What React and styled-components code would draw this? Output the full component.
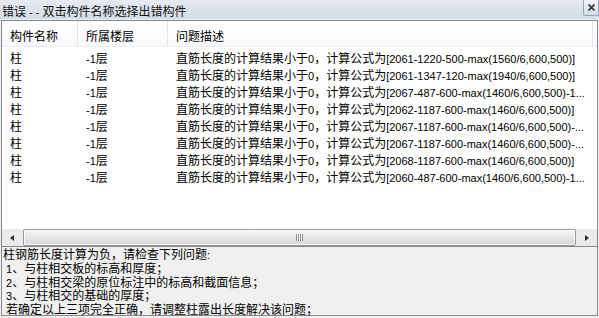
import React from 'react';
import styled, { createGlobalStyle } from 'styled-components';

const GlobalStyle = createGlobalStyle`
  html, body {
    margin: 0;
    padding: 0;
    background: #f0f0f0;
  }
  body {
    font-family: "Noto Sans CJK SC", "Liberation Sans", sans-serif;
    font-size: 12px;
    color: #000;
  }
`

const Dialog = styled.div`
  width: 599px;
  height: 318px;
  display: flex;
  flex-direction: column;
  background: #f0f0f0;
  overflow: hidden;
`

const TitleBar = styled.div`
  height: 19px;
  display: flex;
  align-items: flex-start;
  justify-content: space-between;
  background: linear-gradient(#e6ebf1, #d3dbe5);
`

const Title = styled.div`
  padding: 3px 0 0 2px;
  height: 15px;
  line-height: 15px;
  color: #111;
  white-space: pre;
`

const CloseButton = styled.div`
  width: 14px;
  height: 15px;
  border: 1px solid #97a4b5;
  border-top: none;
  border-radius: 0 0 2px 2px;
  background: linear-gradient(#f1f4f8, #d6dde6);
  display: flex;
  align-items: center;
  justify-content: center;
`

const ListBox = styled.div`
  margin: 1px 1px 0;
  height: 225px;
  border: 1px solid #828790;
  background: #fff;
  display: flex;
  flex-direction: column;
`

const HeaderRow = styled.div`
  height: 26px;
  display: grid;
  grid-template-columns: 76px 90px 425px 1fr;
  background: linear-gradient(#ffffff, #f7f8fa);
  border-bottom: 1px solid #eceef1;
  box-sizing: border-box;
`

const HeaderCell = styled.div`
  display: flex;
  align-items: center;
  padding: 3px 8px 0;
  border-right: ${p => (p.$last ? 'none' : '1px solid #e2e4e8')};
  white-space: nowrap;
`

const Body = styled.div`
  flex: 1;
  padding-top: 2px;
  overflow: hidden;
`

const Row = styled.div`
  height: 17px;
  display: grid;
  grid-template-columns: 76px 90px 425px;
  line-height: 17px;
`

const Cell = styled.div`
  padding: 0 8px;
  height: 17px;
  white-space: nowrap;
  overflow: hidden;
`

const Latin = styled.span`
  font-family: "Liberation Sans", "DejaVu Sans", sans-serif;
  font-size: 11px;
  line-height: 1;
`

const ScrollBar = styled.div`
  height: 17px;
  display: flex;
  align-items: stretch;
  background: #ebebeb;
`

const ArrowButton = styled.div`
  width: 20px;
  display: flex;
  align-items: center;
  justify-content: center;
`

const Arrow = styled.div`
  width: 0;
  height: 0;
  border-top: 3.5px solid transparent;
  border-bottom: 3.5px solid transparent;
  ${p => (p.$dir === 'left'
    ? 'border-right: 4px solid #2b2b2b;'
    : 'border-left: 4px solid #2b2b2b;')}
`

const Thumb = styled.div`
  flex: 1;
  margin: 0 1px;
  border: 1px solid #999;
  border-radius: 2px;
  background: linear-gradient(#f7f7f7, #e6e6e6 50%, #d9d9d9);
  box-shadow: inset 0 0 0 1px rgba(255, 255, 255, 0.8);
  display: flex;
  align-items: center;
  justify-content: center;
`

const Grip = styled.div`
  width: 7px;
  height: 7px;
  background: repeating-linear-gradient(90deg, #8a8a8a 0 1px, #fcfcfc 1px 2px);
`

const Notes = styled.div`
  margin: 0 1px;
  height: 68px;
  border: 1px solid #8a8a8a;
  border-top: none;
  background: #f0f0f0;
  padding: 0 0 0 1px;
`

const NoteLine = styled.div`
  height: 13.8px;
  line-height: 13.8px;
  white-space: pre;
`

// ASCII runs get the narrower latin face, as the original UI does
function Mixed({ text }) {
  return text.split(/([\x20-\x7E]+)/).map((part, i) =>
    /[\x20-\x7E]/.test(part) ? <Latin key={i}>{part}</Latin> : part
  );
}

const rows = [
  ['柱', '-1层', '直筋长度的计算结果小于0，计算公式为[2061-1220-500-max(1560/6,600,500)]'],
  ['柱', '-1层', '直筋长度的计算结果小于0，计算公式为[2061-1347-120-max(1940/6,600,500)]'],
  ['柱', '-1层', '直筋长度的计算结果小于0，计算公式为[2067-487-600-max(1460/6,600,500)-1...'],
  ['柱', '-1层', '直筋长度的计算结果小于0，计算公式为[2062-1187-600-max(1460/6,600,500)]'],
  ['柱', '-1层', '直筋长度的计算结果小于0，计算公式为[2067-1187-600-max(1460/6,600,500)-...'],
  ['柱', '-1层', '直筋长度的计算结果小于0，计算公式为[2067-1187-600-max(1460/6,600,500)-...'],
  ['柱', '-1层', '直筋长度的计算结果小于0，计算公式为[2068-1187-600-max(1460/6,600,500)]'],
  ['柱', '-1层', '直筋长度的计算结果小于0，计算公式为[2060-487-600-max(1460/6,600,500)-1...'],
]

const notes = [
  '柱钢筋长度计算为负，请检查下列问题:',
  ' 1、与柱相交板的标高和厚度；',
  ' 2、与柱相交梁的原位标注中的标高和截面信息；',
  ' 3、与柱相交的基础的厚度；',
  ' 若确定以上三项完全正确，请调整柱露出长度解决该问题；',
]

export default function App() {
  return (
    <Dialog>
      <GlobalStyle />
      <TitleBar>
        <Title><Mixed text="错误 - - 双击构件名称选择出错构件" /></Title>
        <CloseButton>
          <svg width="7" height="7" viewBox="0 0 7 7">
            <path d="M0.5 0.5 L6.5 6.5 M6.5 0.5 L0.5 6.5" stroke="#3a3a3a" strokeWidth="1.8" />
          </svg>
        </CloseButton>
      </TitleBar>
      <ListBox>
        <HeaderRow>
          <HeaderCell>构件名称</HeaderCell>
          <HeaderCell>所属楼层</HeaderCell>
          <HeaderCell>问题描述</HeaderCell>
          <HeaderCell $last />
        </HeaderRow>
        <Body>
          {rows.map((r, i) => (
            <Row key={i}>
              <Cell>{r[0]}</Cell>
              <Cell><Mixed text={r[1]} /></Cell>
              <Cell><Mixed text={r[2]} /></Cell>
            </Row>
          ))}
        </Body>
        <ScrollBar>
          <ArrowButton><Arrow $dir="left" /></ArrowButton>
          <Thumb><Grip /></Thumb>
          <ArrowButton><Arrow $dir="right" /></ArrowButton>
        </ScrollBar>
      </ListBox>
      <Notes>
        {notes.map((n, i) => (
          <NoteLine key={i}><Mixed text={n} /></NoteLine>
        ))}
      </Notes>
    </Dialog>
  );
}
